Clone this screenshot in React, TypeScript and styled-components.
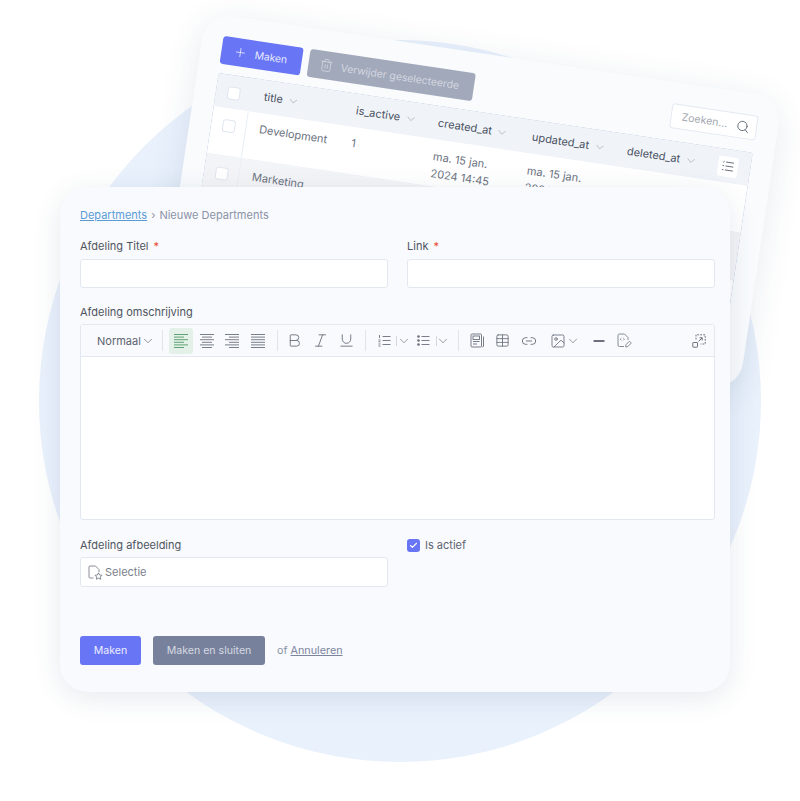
import React, { FC, ReactNode } from 'react';
import styled, { createGlobalStyle } from 'styled-components';
import { Plus, Trash2, Search, ChevronDown, Check, Bold, Italic, Underline, Table, Link2, Image, Minus } from 'lucide-react';

const GlobalStyle = createGlobalStyle`
    html, body {
        margin: 0;
        padding: 0;
        background: #fff;
    }
    * {
        box-sizing: border-box;
    }
`

const Stage = styled.div`
    position: relative;
    width: 800px;
    height: 801px;
    overflow: hidden;
    font-family: Inter, "Liberation Sans", sans-serif;
    background: #fff;
`

const Circle = styled.div`
    position: absolute;
    left: 39px;
    top: 40px;
    width: 722px;
    height: 722px;
    border-radius: 50%;
    background: #e9f1fc;
`

/* back window, the table */
const BackWindow = styled.div`
    position: absolute;
    left: 206px;
    top: 12px;
    width: 583px;
    height: 296px;
    padding: 21px 21px 0 20.5px;
    border-radius: 28px;
    background: #f9fbfd;
    box-shadow: 0 6px 34px rgba(50, 70, 110, 0.11);
    transform: rotate(8.5deg);
    transform-origin: 0 0;
    overflow: hidden;
`

const TopBar = styled.div`
    display: flex;
    align-items: flex-start;
    gap: 7px;
    height: 37px;
`

const TopButton = styled.div<{ $muted?: boolean }>`
    display: flex;
    align-items: center;
    height: 28px;
    width: ${p => (p.$muted ? '167px' : '81px')};
    padding-left: ${p => (p.$muted ? '11px' : '12px')};
    gap: ${p => (p.$muted ? '8px' : '8px')};
    border-radius: 3px;
    font-size: 10.4px;
    white-space: nowrap;
    color: ${p => (p.$muted ? '#d3d7e0' : '#e6e8ff')};
    background: ${p => (p.$muted ? '#a2a9bb' : '#6875f5')};
`

const SearchBox = styled.div`
    display: flex;
    align-items: center;
    justify-content: space-between;
    width: 87px;
    height: 25px;
    margin-left: auto;
    padding: 0 6px 0 10px;
    border: 1px solid #e4e9f1;
    border-radius: 3px;
    background: #fff;
    font-size: 10.6px;
    color: #a4a8b0;
`

const DataTable = styled.div`
    border: 1px solid #d9e1ee;
    border-bottom: 0;
    border-radius: 4px 4px 0 0;
    background: #fff;
`

const TableRow = styled.div<{ $head?: boolean; $alt?: boolean; $h?: number }>`
    display: grid;
    grid-template-columns: 35.5px 93px 83px 95px 96px 105px 1fr;
    height: ${p => p.$h ?? 48}px;
    align-items: ${p => (p.$head ? 'center' : 'start')};
    background: ${p => (p.$head ? '#f0f4f9' : p.$alt ? '#f3f4f7' : '#fff')};
    border-bottom: ${p => (p.$head ? '0' : '1px solid #eef1f6')};
    font-size: 11px;
    line-height: 19px;
    color: ${p => (p.$head ? '#4b5262' : '#6b7280')};
`

const CheckCell = styled.div<{ $head?: boolean }>`
    display: flex;
    justify-content: flex-start;
    height: 100%;
    padding: 11px 0 0 11px;
    border-right: ${p => (p.$head ? '0' : '1px solid #e9eef5')};
`

const RowCheck = styled.div`
    width: 13px;
    height: 13px;
    border: 1px solid #e0e6ef;
    border-radius: 3px;
    background: #fff;
`

const Cell = styled.div<{ $head?: boolean }>`
    display: flex;
    align-items: center;
    padding: ${p => (p.$head ? '0 0 0 13px' : '6.5px 0 0 13px')};
`

const DateCell = styled(Cell)`
    display: block;
    padding-top: 9px;
    line-height: 16.5px;
`

const HeadChevron = styled(ChevronDown)`
    width: 13px;
    height: 13px;
    margin-left: 4px;
    color: #a4abb8;
`

const ColumnsButton = styled.div`
    display: flex;
    align-items: center;
    justify-content: center;
    width: 20px;
    height: 20px;
    border-radius: 2px;
    background: #fff;
    color: #5f6672;
`

/* front window, the form */
const FrontWindow = styled.div`
    position: absolute;
    left: 60px;
    top: 187px;
    width: 670px;
    height: 505px;
    padding: 20px 15px 0 20px;
    border-radius: 28px;
    background: #f9fafd;
    box-shadow: 0 6px 28px rgba(50, 70, 110, 0.12);
`

const Breadcrumb = styled.div`
    display: flex;
    align-items: center;
    height: 15px;
    margin-bottom: 16px;
    font-size: 11px;
    color: #8a93a8;
`

const CrumbLink = styled.a`
    color: #5b9bd5;
    text-decoration: underline;
`

const CrumbSep = styled.span`
    margin: 0 4px;
`

const FormGrid = styled.div`
    display: grid;
    grid-template-columns: 308px 308px;
    column-gap: 19px;
    row-gap: 16px;
`

const Field = styled.div<{ $wide?: boolean; $mt?: number }>`
    grid-column: ${p => (p.$wide ? '1 / 3' : 'auto')};
    margin-top: ${p => p.$mt ?? 0}px;
`

const Label = styled.div<{ $gap?: number }>`
    display: flex;
    align-items: center;
    height: 16px;
    margin-bottom: ${p => p.$gap ?? 5}px;
    font-size: 11px;
    color: #4f5560;
`

const Required = styled.span`
    margin-left: 5px;
    color: #e8492b;
    font-size: 11px;
`

const Input = styled.div<{ $h?: number }>`
    display: flex;
    align-items: center;
    gap: 2px;
    height: ${p => p.$h ?? 29}px;
    padding-left: 7px;
    border: 1px solid #e2e7f0;
    border-radius: 3px;
    background: #fff;
    font-size: 11px;
    color: #7a808b;
`

const Editor = styled.div`
    height: 196px;
    border: 1px solid #e2e7f0;
    border-radius: 3px;
    background: #fff;
`

const Toolbar = styled.div`
    display: flex;
    align-items: center;
    height: 32px;
    padding: 0 3px 0 16px;
    border-bottom: 1px solid #e2e7f0;
    background: #f9fafd;
    color: #6a717d;
`

const FormatSelect = styled.div`
    display: flex;
    align-items: center;
    width: 54px;
    margin-right: 11px;
    font-size: 11px;
    color: #5d6470;
`

const ToolSep = styled.div`
    width: 1px;
    height: 21px;
    background: #dfe3ea;
`

const ToolGroup = styled.div<{ $ml: number; $mr?: number }>`
    display: flex;
    align-items: center;
    gap: 1.67px;
    margin-left: ${p => p.$ml}px;
    margin-right: ${p => p.$mr ?? 0}px;
`

const Tool = styled.div<{ $active?: boolean; $w?: number }>`
    position: relative;
    display: flex;
    align-items: center;
    justify-content: center;
    width: ${p => p.$w ?? 24}px;
    height: 26px;
    border-radius: 3px;
    background: ${p => (p.$active ? '#e3f1e8' : 'transparent')};
    color: ${p => (p.$active ? '#4f9a68' : '#6a717d')};

    svg {
        flex-shrink: 0;
    }
`

const ThinSep = styled.span`
    position: absolute;
    right: -1px;
    top: 8px;
    width: 1px;
    height: 10px;
    background: #d5d9e0;
`

const EndTool = styled(Tool)`
    margin-left: auto;
`

const SmallChevron = styled(ChevronDown)`
    width: 14px;
    height: 14px;
    flex-shrink: 0;
`

const CheckRow = styled.div`
    display: flex;
    align-items: center;
    height: 16px;
    margin-top: 1px;
    gap: 5px;
    font-size: 11px;
    color: #5d6470;
`

const Checked = styled.div`
    display: flex;
    align-items: center;
    justify-content: center;
    width: 13px;
    height: 13px;
    border-radius: 3px;
    background: #6875f5;
    color: #fff;
`

const Actions = styled.div`
    display: flex;
    align-items: center;
    margin-top: 49px;
`

const ActionButton = styled.div<{ $grey?: boolean }>`
    display: flex;
    align-items: center;
    justify-content: center;
    width: ${p => (p.$grey ? '112px' : '61px')};
    height: 29px;
    margin-right: 12px;
    border-radius: 3px;
    font-size: 10.6px;
    color: ${p => (p.$grey ? '#d5d9e3' : '#eceeff')};
    background: ${p => (p.$grey ? '#78819b' : '#6875f5')};
`

const CancelText = styled.div`
    font-size: 10.8px;
    color: #8a93a8;
`

const CancelLink = styled.a`
    color: #7c84a0;
    text-decoration: underline;
`

const LinesIcon: FC<{ mode: 'left' | 'center' | 'right' | 'full' }> = ({ mode }) => {
    const rows = [0, 1, 2, 3, 4, 5];
    return (
        <svg width="16" height="16" viewBox="0 0 16 16" fill="none" stroke="currentColor" strokeWidth="0.9">
            {rows.map(i => {
                const short = i % 2 === 1 && mode !== 'full';
                const len = short ? 10 : 14;
                const x = mode === 'left' ? 1 : mode === 'right' ? 15 - len : 8 - len / 2;
                return <line key={i} x1={x} x2={x + len} y1={1.5 + i * 2.6} y2={1.5 + i * 2.6} />;
            })}
        </svg>
    );
};

const ListIcon: FC<{ ordered?: boolean }> = ({ ordered }) => (
    <svg width="13" height="13" viewBox="0 0 13 13" fill="none" stroke="currentColor" strokeWidth="0.9">
        <line x1="4.5" x2="12.5" y1="2.5" y2="2.5" />
        <line x1="4.5" x2="12.5" y1="6.5" y2="6.5" />
        <line x1="4.5" x2="12.5" y1="10.5" y2="10.5" />
        {ordered ? (
            <>
                <line x1="1.5" x2="1.5" y1="1" y2="4" />
                <line x1="0.5" x2="2.5" y1="6" y2="6" />
                <line x1="0.5" x2="2.5" y1="7.8" y2="7.8" />
                <line x1="0.5" x2="2.5" y1="10" y2="10" />
                <line x1="0.5" x2="2.5" y1="12" y2="12" />
            </>
        ) : (
            <>
                <circle cx="1.5" cy="2.5" r="1.3" fill="currentColor" stroke="none" />
                <circle cx="1.5" cy="6.5" r="1.3" fill="currentColor" stroke="none" />
                <circle cx="1.5" cy="10.5" r="1.3" fill="currentColor" stroke="none" />
            </>
        )}
    </svg>
);

const ColumnsIcon: FC = () => (
    <svg width="12" height="11" viewBox="0 0 12 11" fill="none" stroke="currentColor" strokeWidth="0.9">
        <line x1="3.5" x2="11.5" y1="1.5" y2="1.5" />
        <line x1="3.5" x2="11.5" y1="5.5" y2="5.5" />
        <line x1="3.5" x2="11.5" y1="9.5" y2="9.5" />
        <path d="M0.5 1.5 L1 2 L2 0.8" />
        <path d="M0.5 5.5 H2" />
        <path d="M0.5 9.5 H2" />
    </svg>
);

const BlockIcon: FC = () => (
    <svg width="15" height="15" viewBox="0 0 15 15" fill="none" stroke="currentColor" strokeWidth="0.9">
        <rect x="1" y="1" width="10.5" height="13" rx="1" />
        <path d="M13.5 3.5 V13 a1 1 0 0 1 -1 1" />
        <rect x="3" y="3" width="6.5" height="3.5" />
        <line x1="3" x2="9.5" y1="8.5" y2="8.5" />
        <line x1="3" x2="7" y1="11" y2="11" />
    </svg>
);

const CodeEditIcon: FC = () => (
    <svg width="15" height="15" viewBox="0 0 15 15" fill="none" stroke="currentColor" strokeWidth="0.8">
        <path d="M7 13.5 H2.5 a1.5 1.5 0 0 1 -1.5 -1.5 V2.5 A1.5 1.5 0 0 1 2.5 1 H7.5 L11 4.5 V7" />
        <path d="M4.4 5 L3.2 6.2 L4.4 7.4 M6.2 5 L7.4 6.2 L6.2 7.4" strokeWidth="0.7" />
        <path d="M8.6 14 L9 11.6 L12.4 8.2 L14.3 10.1 L10.9 13.5 Z" />
    </svg>
);

const FullscreenIcon: FC = () => (
    <svg width="14" height="14" viewBox="0 0 14 14" fill="none" stroke="currentColor" strokeWidth="1">
        <rect x="0.8" y="8.5" width="4.7" height="4.7" rx="0.5" />
        <path d="M4 5.5 V0.8 H13.2 V10 H8.5" strokeDasharray="1.8 1.2" />
        <path d="M6.5 7.5 L10.2 3.8 M7.5 3.8 H10.2 V6.5" />
    </svg>
);

const FileStarIcon: FC = () => (
    <svg width="15" height="15" viewBox="0 0 15 15" fill="none" stroke="currentColor" strokeWidth="0.9">
        <path d="M5.5 13 H2 a1 1 0 0 1 -1 -1 V2 a1 1 0 0 1 1 -1 H7.5 L11 4.5 V7" />
        <path d="M10.5 7.8 L11.6 10 L14 10.3 L12.3 12 L12.7 14.3 L10.5 13.2 L8.3 14.3 L8.7 12 L7 10.3 L9.4 10 Z" />
    </svg>
);

const FormField: FC<{ label: string; required?: boolean; children: ReactNode; mt?: number; gap?: number }> = ({ label, required, children, mt, gap }) => (
    <Field $mt={mt}>
        <Label $gap={gap}>
            {label}
            {required && <Required>*</Required>}
        </Label>
        {children}
    </Field>
);

const HeadCell: FC<{ name: string }> = ({ name }) => (
    <Cell $head>
        {name}
        <HeadChevron strokeWidth={1.2} />
    </Cell>
);

const App: FC = () => {
    return (
        <Stage>
            <GlobalStyle />
            <Circle />

            <BackWindow>
                <TopBar>
                    <TopButton>
                        <Plus size={14} strokeWidth={1.4} />
                        Maken
                    </TopButton>
                    <TopButton $muted>
                        <Trash2 size={14} strokeWidth={1.3} />
                        Verwijder geselecteerde
                    </TopButton>
                    <SearchBox>
                        Zoeken...
                        <Search size={14} strokeWidth={1.5} color="#5f6672" />
                    </SearchBox>
                </TopBar>
                <DataTable>
                    <TableRow $head $h={33}>
                        <CheckCell $head><RowCheck /></CheckCell>
                        <HeadCell name="title" />
                        <HeadCell name="is_active" />
                        <HeadCell name="created_at" />
                        <HeadCell name="updated_at" />
                        <HeadCell name="deleted_at" />
                        <ColumnsButton><ColumnsIcon /></ColumnsButton>
                    </TableRow>
                    <TableRow>
                        <CheckCell><RowCheck /></CheckCell>
                        <Cell>Development</Cell>
                        <Cell>1</Cell>
                        <DateCell>ma. 15 jan.<br />2024 14:45</DateCell>
                        <DateCell>ma. 15 jan.<br />2024 14:45</DateCell>
                    </TableRow>
                    <TableRow $alt>
                        <CheckCell><RowCheck /></CheckCell>
                        <Cell>Marketing</Cell>
                    </TableRow>
                    <TableRow $h={27} />
                </DataTable>
            </BackWindow>

            <FrontWindow>
                <Breadcrumb>
                    <CrumbLink>Departments</CrumbLink>
                    <CrumbSep>›</CrumbSep>
                    Nieuwe Departments
                </Breadcrumb>
                <FormGrid>
                    <FormField label="Afdeling Titel" required><Input /></FormField>
                    <FormField label="Link" required><Input /></FormField>
                    <Field $wide>
                        <Label $gap={4}>Afdeling omschrijving</Label>
                        <Editor>
                            <Toolbar>
                                <FormatSelect>
                                    Normaal
                                    <SmallChevron strokeWidth={1.2} />
                                </FormatSelect>
                                <ToolSep />
                                <ToolGroup $ml={6} $mr={7}>
                                    <Tool $active><LinesIcon mode="left" /></Tool>
                                    <Tool><LinesIcon mode="center" /></Tool>
                                    <Tool><LinesIcon mode="right" /></Tool>
                                    <Tool><LinesIcon mode="full" /></Tool>
                                </ToolGroup>
                                <ToolSep />
                                <ToolGroup $ml={5} $mr={7}>
                                    <Tool><Bold size={17} strokeWidth={1.3} /></Tool>
                                    <Tool><Italic size={17} strokeWidth={1.3} /></Tool>
                                    <Tool><Underline size={17} strokeWidth={1.3} /></Tool>
                                </ToolGroup>
                                <ToolSep />
                                <ToolGroup $ml={6} $mr={9}>
                                    <Tool><ListIcon ordered /><ThinSep /></Tool>
                                    <Tool $w={12}><SmallChevron strokeWidth={1.2} /></Tool>
                                    <Tool><ListIcon /><ThinSep /></Tool>
                                    <Tool $w={12}><SmallChevron strokeWidth={1.2} /></Tool>
                                </ToolGroup>
                                <ToolSep />
                                <ToolGroup $ml={6}>
                                    <Tool><BlockIcon /></Tool>
                                    <Tool><Table size={15} strokeWidth={1.4} /></Tool>
                                    <Tool><Link2 size={16} strokeWidth={1.4} /></Tool>
                                </ToolGroup>
                                <ToolGroup $ml={6}>
                                    <Tool $w={22}><Image size={16} strokeWidth={1.3} /></Tool>
                                    <Tool $w={6}><SmallChevron strokeWidth={1.2} /></Tool>
                                </ToolGroup>
                                <ToolGroup $ml={11}>
                                    <Tool><Minus size={16} strokeWidth={3} /></Tool>
                                    <Tool><CodeEditIcon /></Tool>
                                </ToolGroup>
                                <EndTool><FullscreenIcon /></EndTool>
                            </Toolbar>
                        </Editor>
                    </Field>
                    <FormField label="Afdeling afbeelding" mt={1} gap={4}>
                        <Input $h={30}>
                            <FileStarIcon />
                            Selectie
                        </Input>
                    </FormField>
                    <CheckRow>
                        <Checked><Check size={9} strokeWidth={3} /></Checked>
                        Is actief
                    </CheckRow>
                </FormGrid>
                <Actions>
                    <ActionButton>Maken</ActionButton>
                    <ActionButton $grey>Maken en sluiten</ActionButton>
                    <CancelText>of <CancelLink>Annuleren</CancelLink></CancelText>
                </Actions>
            </FrontWindow>
        </Stage>
    );
}

export default App;
